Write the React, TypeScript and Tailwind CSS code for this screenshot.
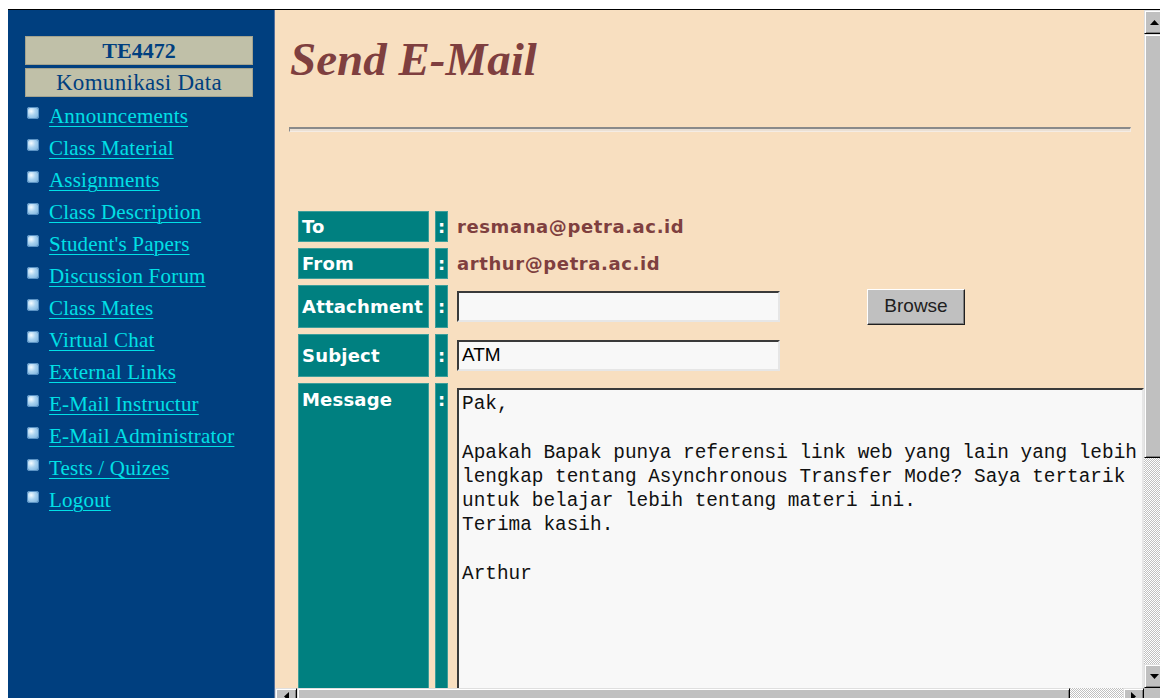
import React from "react";

const menuLinks = [
  "Announcements",
  "Class Material",
  "Assignments",
  "Class Description",
  "Student's Papers",
  "Discussion Forum",
  "Class Mates",
  "Virtual Chat",
  "External Links",
  "E-Mail Instructur",
  "E-Mail Administrator",
  "Tests / Quizes",
  "Logout",
];

const messageBody = `Pak,

Apakah Bapak punya referensi link web yang lain yang lebih
lengkap tentang Asynchronous Transfer Mode? Saya tertarik
untuk belajar lebih tentang materi ini.
Terima kasih.

Arthur`;

function Bullet() {
  return (
    <span className="mt-[7px] h-[12px] w-[12px] shrink-0 rounded-[3px] bg-[radial-gradient(circle_at_35%_35%,#f4fbff_0%,#a9d2f0_40%,#6aa6d6_100%)] shadow-[inset_0_0_0_1px_#5a92c4]" />
  );
}

function Arrow({ dir }: { dir: "up" | "down" | "left" | "right" }) {
  const pts =
    dir === "up"
      ? "4.5,0 9,5 0,5"
      : dir === "down"
      ? "0,0 9,0 4.5,5"
      : dir === "left"
      ? "0,4.5 5,0 5,9"
      : "0,0 5,4.5 0,9";
  const w = dir === "up" || dir === "down" ? 9 : 5;
  const h = dir === "up" || dir === "down" ? 5 : 9;
  return (
    <svg width={w} height={h} viewBox={`0 0 ${w} ${h}`}>
      <polygon points={pts} fill="#000" />
    </svg>
  );
}

function ScrollButton({ dir, className }: { dir: "up" | "down" | "left" | "right"; className: string }) {
  return (
    <div
      className={`${className} flex shrink-0 items-center justify-center border border-t-[#dfdfdf] border-l-[#dfdfdf] border-b-black border-r-black bg-[#c0c0c0] shadow-[inset_1px_1px_0_#ffffff,inset_-1px_-1px_0_#808080]`}
    >
      <Arrow dir={dir} />
    </div>
  );
}

function Label({ children, top }: { children: React.ReactNode; top?: boolean }) {
  return (
    <div
      className={`flex w-[131px] shrink-0 border border-[#3d9e9a] bg-[#008080] pl-[3px] text-[18px] font-bold leading-[21px] tracking-[0.2px] text-white ${
        top ? "items-start pt-[5px]" : "items-center"
      }`}
    >
      {children}
    </div>
  );
}

function Colon({ top }: { top?: boolean }) {
  return (
    <div
      className={`ml-[6px] flex w-[13px] shrink-0 justify-center border border-[#3d9e9a] bg-[#008080] text-[18px] font-bold leading-[21px] text-white ${
        top ? "items-start pt-[5px]" : "items-center"
      }`}
    >
      :
    </div>
  );
}

const insetField =
  "border-2 border-t-[#3a3a3a] border-l-[#3a3a3a] border-b-[#e6e6e6] border-r-[#e6e6e6] bg-[#f8f8f8]";

export default function App() {
  return (
    <div className="h-[698px] w-[1160px] overflow-hidden bg-white pl-[8px] pt-[9px]">
      <div className="flex h-[696px] border-t border-black">
        {/* course navigation frame */}
        <aside className="h-full w-[267px] shrink-0 border-r border-[#56719c] bg-[#003f7f] pt-[26px] font-['Liberation_Serif',serif]">
          <div className="ml-[17px] flex w-[228px] flex-col gap-[3px] text-center text-[#003f7f]">
            <div className="h-[29px] border border-[#a3a38f] bg-[#c0c0a8] text-[22px] font-bold leading-[27px]">
              TE4472
            </div>
            <div className="h-[29px] border border-[#a3a38f] bg-[#c0c0a8] text-[23px] leading-[27px] tracking-[0.3px]">
              Komunikasi Data
            </div>
          </div>
          <ul className="ml-[19px] mt-[3px]">
            {menuLinks.map((l) => (
              <li key={l} className="flex h-[32px] gap-[10px]">
                <Bullet />
                <a
                  href="#"
                  className="text-[21px] leading-[32px] tracking-[0.2px] text-[#00e0e6] underline decoration-1 underline-offset-[3px]"
                >
                  {l}
                </a>
              </li>
            ))}
          </ul>
        </aside>

        {/* content frame */}
        <div className="flex shrink-0 flex-col">
          <div className="flex h-[678px] shrink-0">
            <main className="h-full w-[869px] shrink-0 overflow-hidden bg-[#f8dfc0]">
              <h1 className="ml-[15px] mt-[26px] font-['Liberation_Serif',serif] text-[47px] font-bold italic leading-[46px] text-[#7f3f3f]">
                Send E-Mail
              </h1>
              <div className="ml-[14px] mr-[13px] mt-[45px] h-[5px] border-t-2 border-l border-b border-r border-t-[#8a8a8a] border-l-[#8a8a8a] border-b-[#f4ece4] border-r-[#f4ece4] bg-[#ebe0d4]" />

              <div className="ml-[23px] mt-[79px] flex flex-col gap-[6px] font-['DejaVu_Sans',sans-serif]">
                <div className="flex h-[31px]">
                  <Label>To</Label>
                  <Colon />
                  <div className="ml-[9px] flex items-center text-[18px] font-bold tracking-[0.6px] text-[#7f3f3f]">
                    resmana@petra.ac.id
                  </div>
                </div>
                <div className="flex h-[31px]">
                  <Label>From</Label>
                  <Colon />
                  <div className="ml-[9px] flex items-center text-[18px] font-bold tracking-[0.6px] text-[#7f3f3f]">
                    arthur@petra.ac.id
                  </div>
                </div>
                <div className="flex h-[43px]">
                  <Label>Attachment</Label>
                  <Colon />
                  <div className="ml-[9px] flex items-center">
                    <div className={`h-[31px] w-[323px] ${insetField}`} />
                    <div className="ml-[87px] flex h-[36px] w-[98px] items-center justify-center border border-t-white border-l-white border-b-[#202020] border-r-[#202020] bg-[#c0c0c0] font-['Liberation_Sans',sans-serif] text-[19px] text-[#202020] shadow-[inset_-1px_-1px_0_#808080]">
                      Browse
                    </div>
                  </div>
                </div>
                <div className="flex h-[43px]">
                  <Label>Subject</Label>
                  <Colon />
                  <div className="ml-[9px] flex items-center">
                    <div
                      className={`flex h-[31px] w-[323px] items-center pl-[3px] font-['Liberation_Sans',sans-serif] text-[19px] text-black ${insetField}`}
                    >
                      ATM
                    </div>
                  </div>
                </div>
                <div className="flex h-[330px]">
                  <Label top>Message</Label>
                  <Colon top />
                  <div
                    className={`ml-[9px] mt-[5px] h-[330px] w-[720px] overflow-hidden whitespace-pre pl-[3px] pt-[2px] font-['Liberation_Mono',monospace] text-[19.4px] leading-[24.3px] text-[#111] ${insetField}`}
                  >
                    {messageBody}
                  </div>
                </div>
              </div>
            </main>

            {/* vertical scrollbar */}
            <div className="flex h-full w-[20px] shrink-0 flex-col bg-[repeating-conic-gradient(#c0c0c0_0%_25%,#ffffff_0%_50%)] bg-[length:2px_2px]">
              <ScrollButton dir="up" className="h-[24px] w-[20px]" />
              <div className="h-[424px] shrink-0 border border-t-[#dfdfdf] border-l-[#dfdfdf] border-b-black border-r-black bg-[#c0c0c0] shadow-[inset_1px_1px_0_#ffffff,inset_-1px_-1px_0_#808080]" />
              <div className="flex-1" />
              <ScrollButton dir="down" className="h-[24px] w-[20px]" />
            </div>
          </div>

          {/* horizontal scrollbar */}
          <div className="flex h-[17px] shrink-0">
            <div className="flex w-[869px] shrink-0 bg-[repeating-conic-gradient(#c0c0c0_0%_25%,#ffffff_0%_50%)] bg-[length:2px_2px]">
              <ScrollButton dir="left" className="h-[17px] w-[22px]" />
              <div className="w-[773px] shrink-0 border border-t-[#dfdfdf] border-l-[#dfdfdf] border-b-black border-r-black bg-[#c0c0c0] shadow-[inset_1px_1px_0_#ffffff,inset_-1px_-1px_0_#808080]" />
              <div className="flex-1" />
              <ScrollButton dir="right" className="h-[17px] w-[21px]" />
            </div>
            <div className="w-[20px] shrink-0 bg-[#c0c0c0]" />
          </div>
        </div>
      </div>
    </div>
  );
}
